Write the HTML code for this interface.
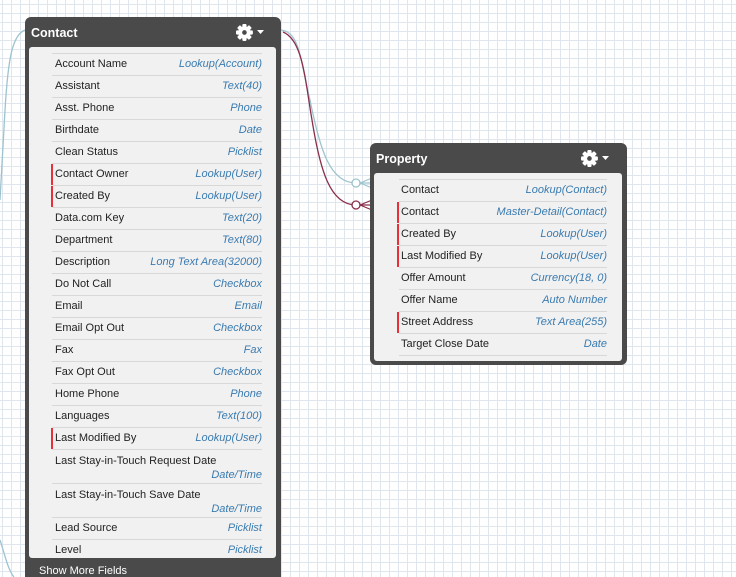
<!DOCTYPE html>
<html style="height:577px;overflow:hidden"><head><meta charset="utf-8"><style>
body{margin:0;width:736px;height:577px;overflow:hidden;position:relative;font-family:"Liberation Sans",Arial,sans-serif;font-size:11px;
background-color:#fff;background-image:linear-gradient(to right,#dfe6ee 1px,transparent 1px),linear-gradient(to bottom,#dfe6ee 1px,transparent 1px);background-size:9px 9px;background-position:2px 4px;}
.obj{position:absolute;background:#4a4a4a;border-radius:6px;}
.obj .t{position:absolute;left:6px;top:9px;color:#fff;font-weight:bold;font-size:12.5px;}
.gear{position:absolute;top:6px;width:19px;height:19px}
.inner{position:absolute;background:#f1f1f1;border-radius:3px;}
.row{position:absolute;border-top:1px solid #d8d8d8;height:21px;line-height:21px;color:#222;}
.row .ty{position:absolute;right:0;top:0;color:#3a7bb0;font-style:italic;}
.row.r::before{content:"";position:absolute;left:-1px;top:0;width:2px;height:100%;background:#e8303a;}
.p .row.r::before{left:-2px}
.row.tall{height:33px;line-height:14px}
.row.tall .nm{position:absolute;top:4px;left:3px;padding:0}
.row.tall .ty{top:18px;line-height:14px}
.nm{padding-left:3px}
</style></head><body>
<svg width="736" height="577" style="position:absolute;left:0;top:0">
<path d="M281 30 C300 32,300 60,310 100 C320 150,330 183,356 183" fill="none" stroke="#9dc3cf" stroke-width="1.3"/>
<path d="M283 32 C303 40,305 80,312 120 C320 170,330 205,356 205" fill="none" stroke="#8a2e4a" stroke-width="1.3"/>
<circle cx="356" cy="183" r="4" fill="#fff" stroke="#9dc3cf" stroke-width="1.3"/>
<circle cx="356" cy="205" r="4" fill="#fff" stroke="#8a2e4a" stroke-width="1.3"/>
<path d="M360 183 L372 183 M360 183 L372 178 M360 183 L372 188" stroke="#9dc3cf" stroke-width="1.2" fill="none"/>
<path d="M360 205 L372 205 M360 205 L372 200 M360 205 L372 210" stroke="#8a2e4a" stroke-width="1.2" fill="none"/>
<path d="M25 30 C12 35,8 60,5 110 L0 200" fill="none" stroke="#9dc3cf" stroke-width="1.3"/>
<path d="M0 540 C5 555,8 570,14 577" fill="none" stroke="#9dc3cf" stroke-width="1.3"/>
</svg>

<div class="obj" style="left:25px;top:17px;width:256px;height:580px">
<div class="t">Contact</div>
<svg class="gear" style="left:211px" viewBox="0 0 18 18"><g fill="#fff"><circle cx="8" cy="9" r="5.8"/><rect x="6" y="1" width="4" height="16" rx="1"/><rect x="0" y="7" width="16" height="4" rx="1"/><rect x="6" y="1" width="4" height="16" rx="1" transform="rotate(45 8 9)"/><rect x="6" y="1" width="4" height="16" rx="1" transform="rotate(-45 8 9)"/></g><circle cx="8" cy="9" r="2.2" fill="#4a4a4a"/></svg>
<svg style="position:absolute;left:232px;top:13px" width="8" height="5"><path d="M0 0H7L3.5 4Z" fill="#fff"/></svg>
<div class="inner" style="left:4px;top:30px;width:247px;height:511px"></div>
<div style="position:absolute;left:14px;top:548px;color:#fff;font-size:11px">Show More Fields</div>
</div>

<div style="position:absolute;left:27px;top:1px;width:236px">
<div class="row" style="left:25px;top:52px;width:210px"><span class="nm">Account Name</span><span class="ty">Lookup(Account)</span></div>
<div class="row" style="left:25px;top:74px;width:210px"><span class="nm">Assistant</span><span class="ty">Text(40)</span></div>
<div class="row" style="left:25px;top:96px;width:210px"><span class="nm">Asst. Phone</span><span class="ty">Phone</span></div>
<div class="row" style="left:25px;top:118px;width:210px"><span class="nm">Birthdate</span><span class="ty">Date</span></div>
<div class="row" style="left:25px;top:140px;width:210px"><span class="nm">Clean Status</span><span class="ty">Picklist</span></div>
<div class="row r" style="left:25px;top:162px;width:210px"><span class="nm">Contact Owner</span><span class="ty">Lookup(User)</span></div>
<div class="row r" style="left:25px;top:184px;width:210px"><span class="nm">Created By</span><span class="ty">Lookup(User)</span></div>
<div class="row" style="left:25px;top:206px;width:210px"><span class="nm">Data.com Key</span><span class="ty">Text(20)</span></div>
<div class="row" style="left:25px;top:228px;width:210px"><span class="nm">Department</span><span class="ty">Text(80)</span></div>
<div class="row" style="left:25px;top:250px;width:210px"><span class="nm">Description</span><span class="ty">Long Text Area(32000)</span></div>
<div class="row" style="left:25px;top:272px;width:210px"><span class="nm">Do Not Call</span><span class="ty">Checkbox</span></div>
<div class="row" style="left:25px;top:294px;width:210px"><span class="nm">Email</span><span class="ty">Email</span></div>
<div class="row" style="left:25px;top:316px;width:210px"><span class="nm">Email Opt Out</span><span class="ty">Checkbox</span></div>
<div class="row" style="left:25px;top:338px;width:210px"><span class="nm">Fax</span><span class="ty">Fax</span></div>
<div class="row" style="left:25px;top:360px;width:210px"><span class="nm">Fax Opt Out</span><span class="ty">Checkbox</span></div>
<div class="row" style="left:25px;top:382px;width:210px"><span class="nm">Home Phone</span><span class="ty">Phone</span></div>
<div class="row" style="left:25px;top:404px;width:210px"><span class="nm">Languages</span><span class="ty">Text(100)</span></div>
<div class="row r" style="left:25px;top:426px;width:210px"><span class="nm">Last Modified By</span><span class="ty">Lookup(User)</span></div>
<div class="row tall" style="left:25px;top:448px;width:210px"><span class="nm">Last Stay-in-Touch Request Date</span><span class="ty">Date/Time</span></div>
<div class="row tall" style="left:25px;top:482px;width:210px"><span class="nm">Last Stay-in-Touch Save Date</span><span class="ty">Date/Time</span></div>
<div class="row" style="left:25px;top:516px;width:210px"><span class="nm">Lead Source</span><span class="ty">Picklist</span></div>
<div class="row" style="left:25px;top:538px;width:210px"><span class="nm">Level</span><span class="ty">Picklist</span></div>
</div>

<div class="obj" style="left:370px;top:143px;width:257px;height:222px">
<div class="t">Property</div>
<svg class="gear" style="left:211px" viewBox="0 0 18 18"><g fill="#fff"><circle cx="8" cy="9" r="5.8"/><rect x="6" y="1" width="4" height="16" rx="1"/><rect x="0" y="7" width="16" height="4" rx="1"/><rect x="6" y="1" width="4" height="16" rx="1" transform="rotate(45 8 9)"/><rect x="6" y="1" width="4" height="16" rx="1" transform="rotate(-45 8 9)"/></g><circle cx="8" cy="9" r="2.2" fill="#4a4a4a"/></svg>
<svg style="position:absolute;left:232px;top:13px" width="8" height="5"><path d="M0 0H7L3.5 4Z" fill="#fff"/></svg>
<div class="inner" style="left:4px;top:30px;width:248px;height:188px"></div>
</div>
<div class="p" style="position:absolute;left:372px;top:1px;width:236px">
<div class="row" style="left:27px;top:178px;width:208px"><span class="nm" style="padding-left:2px">Contact</span><span class="ty">Lookup(Contact)</span></div>
<div class="row r" style="left:27px;top:200px;width:208px"><span class="nm" style="padding-left:2px">Contact</span><span class="ty">Master-Detail(Contact)</span></div>
<div class="row r" style="left:27px;top:222px;width:208px"><span class="nm" style="padding-left:2px">Created By</span><span class="ty">Lookup(User)</span></div>
<div class="row r" style="left:27px;top:244px;width:208px"><span class="nm" style="padding-left:2px">Last Modified By</span><span class="ty">Lookup(User)</span></div>
<div class="row" style="left:27px;top:266px;width:208px"><span class="nm" style="padding-left:2px">Offer Amount</span><span class="ty">Currency(18, 0)</span></div>
<div class="row" style="left:27px;top:288px;width:208px"><span class="nm" style="padding-left:2px">Offer Name</span><span class="ty">Auto Number</span></div>
<div class="row r" style="left:27px;top:310px;width:208px"><span class="nm" style="padding-left:2px">Street Address</span><span class="ty">Text Area(255)</span></div>
<div class="row" style="left:27px;top:332px;width:208px;border-bottom:1px solid #d8d8d8"><span class="nm" style="padding-left:2px">Target Close Date</span><span class="ty">Date</span></div>
</div>
</body></html>
